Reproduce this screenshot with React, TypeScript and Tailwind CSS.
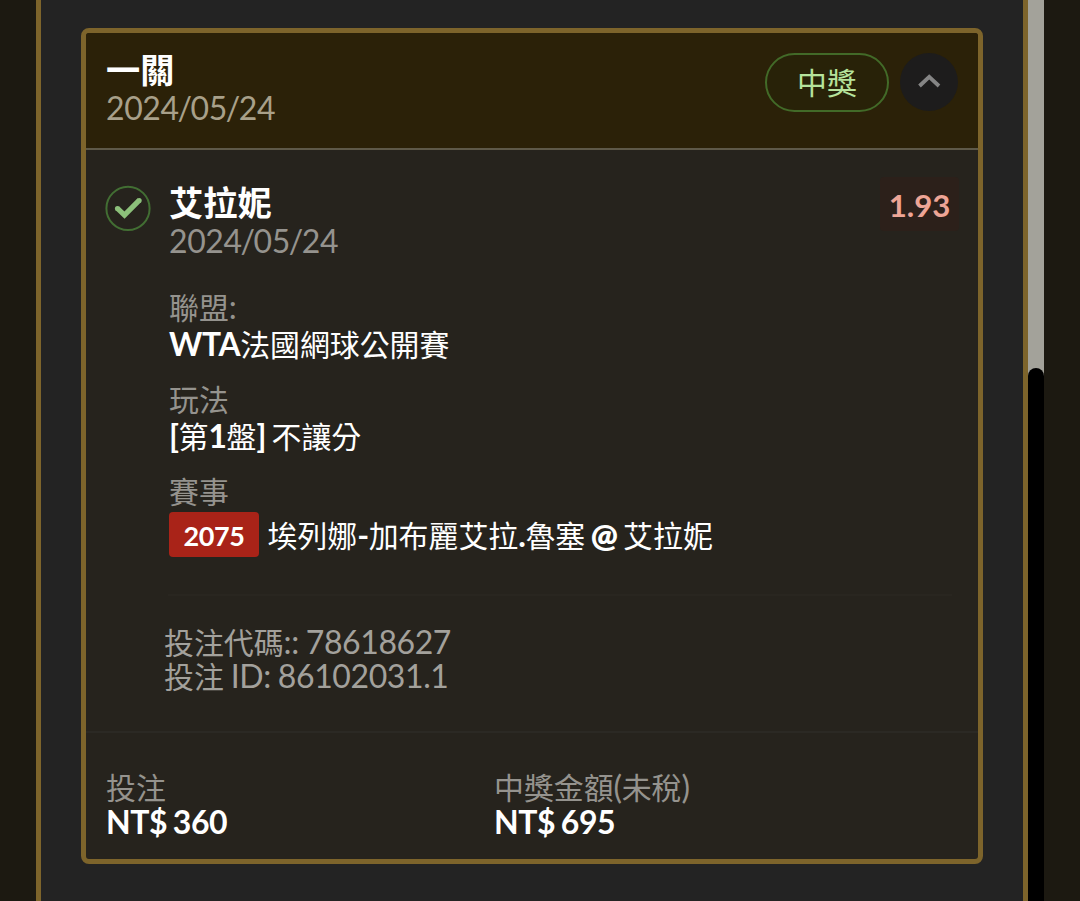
import React from 'react';

interface TextProps {
  children: React.ReactNode;
}

// chinese glyphs run a little smaller than the latin ones
const Zh = ({ children }: TextProps) => (
  <span className="text-[29.9px] leading-none font-normal tracking-normal">{children}</span>
);

const Label = ({ children }: TextProps) => (
  <div className="h-[35px] text-[32px] leading-[34px] text-[#95938e]">{children}</div>
);

const Slash = () => <span className="-mx-[1.1px]">/</span>;

const BetDate = () => (
  <div className="mt-[1px] h-[35px] text-[32px] leading-[35px]">
    2024<Slash />05<Slash />24
  </div>
);

const CheckBadge = () => (
  <svg className="block h-[46px] w-[46px]" viewBox="0 0 46 46" fill="none">
    <circle cx="23" cy="23.4" r="21.6" stroke="#426e33" strokeWidth="2" />
    <path d="M12.2 23.2L19.5 30.2L34.4 15.2" stroke="#8cc07a" strokeWidth="5.2" />
    <circle cx="12.4" cy="23.4" r="2.5" fill="#8cc07a" />
    <circle cx="34.2" cy="15.4" r="2.5" fill="#8cc07a" />
  </svg>
);

const ChevronUp = () => (
  <svg className="block h-6 w-6" viewBox="0 0 24 24" fill="none">
    <path d="M2.5 16L12.2 6.8L22 16" stroke="#858585" strokeWidth="3.8" />
  </svg>
);

const Scrollbar = () => (
  <div className="h-full w-4 bg-[#a3a29a]">
    <div className="h-[368px]" />
    <div className="h-[533px] rounded-t-full bg-black" />
  </div>
);

export default function App() {
  return (
    <div className="flex h-[901px] w-[1080px] overflow-hidden bg-[#1c1911] font-['Lato','Noto_Sans_CJK_TC',sans-serif] tracking-[-0.4px] [word-spacing:-1.8px] whitespace-nowrap text-white">
      <div className="ml-9 h-full w-[992px] border-x-5 border-[#7d642b] bg-[#232323] px-10 pt-7">
        <div className="h-[836px] w-[902px] overflow-hidden rounded-lg border-5 border-[#7d642b] bg-[#26231d]">
          {/* header */}
          <div className="flex h-[117px] justify-between border-b-2 border-[#5e5949] bg-[#2b2108] pt-[18px] pr-[20px] pl-[20px]">
            <div>
              <h2 className="h-[38px] text-[34.2px] leading-[37px] font-bold tracking-normal">一關</h2>
              <div className="text-[#a8a08a]">
                <BetDate />
              </div>
            </div>
            <div className="flex gap-3 pt-[2px]">
              <div className="-mr-[1px] flex h-[59px] w-[124px] items-center justify-center rounded-full border-2 border-[#426a28] bg-[#282208] text-[#b6e39c]">
                <Zh>中獎</Zh>
              </div>
              <button className="flex h-[58px] w-[58px] items-center justify-center rounded-full bg-[#1d1c1c]">
                <ChevronUp />
              </button>
            </div>
          </div>

          {/* bet */}
          <div className="flex h-[581px] pr-[19px] pl-[19px]">
            <div className="w-[63px] pt-[35px]">
              <CheckBadge />
            </div>
            <div className="flex-1">
              <div className="flex h-[140px] justify-between pt-[34px] pl-[1px]">
                <div>
                  <h3 className="h-[38px] text-[34.2px] leading-[38px] font-bold tracking-normal">艾拉妮</h3>
                  <div className="text-[#95938e]">
                    <BetDate />
                  </div>
                </div>
                <div className="-mt-[7px] h-[54px] w-[79px] rounded bg-[#2c201a] text-center text-[31.2px] leading-[56px] font-bold tracking-normal text-[#eea596]">
                  1.93
                </div>
              </div>

              <div className="mr-[7px] flex h-[306px] flex-col gap-5 border-b-2 border-[#292620] pl-[1px]">
                <div>
                  <Label><Zh>聯盟</Zh>:</Label>
                  <div className="h-[37px] text-[31.8px] leading-[39px] font-bold">
                    WTA<Zh>法國網球公開賽</Zh>
                  </div>
                </div>
                <div>
                  <Label><Zh>玩法</Zh></Label>
                  <div className="h-[37px] text-[31.8px] leading-[39px] font-bold">
                    [<Zh>第</Zh>1<Zh>盤</Zh>] <Zh>不讓分</Zh>
                  </div>
                </div>
                <div>
                  <Label><Zh>賽事</Zh></Label>
                  <div className="flex items-center pt-[3px] text-[32px] font-bold">
                    <span className="mr-[8.5px] h-[45px] w-[90px] rounded bg-[#a92318] text-center text-[27px] leading-[47px]">2075</span>
                    <span className="leading-[45px]">
                      <Zh>埃列娜</Zh>-<Zh>加布麗艾拉</Zh>.<Zh>魯塞</Zh>{' '}
                      <span className="font-extrabold">@</span> <Zh>艾拉妮</Zh>
                    </span>
                  </div>
                </div>
              </div>

              <div className="-ml-1 pt-[29px] text-[32px] leading-[34px] text-[#a3a19c] [word-spacing:-0.8px]">
                <div><Zh>投注代碼</Zh>:: 78618627</div>
                <div><Zh>投注</Zh> ID: 86102031.1</div>
              </div>
            </div>
          </div>

          {/* totals */}
          <div className="flex h-[128px] border-t-2 border-[#2b2924] pt-[37px] pl-[20px]">
            <div className="w-[388px]">
              <Label><Zh>投注</Zh></Label>
              <div className="text-[32px] leading-[34px] font-bold">NT$ 360</div>
            </div>
            <div>
              <Label><Zh>中獎金額</Zh>(<Zh>未稅</Zh>)</Label>
              <div className="text-[32px] leading-[34px] font-bold">NT$ 695</div>
            </div>
          </div>
        </div>
      </div>
      <Scrollbar />
    </div>
  );
}
